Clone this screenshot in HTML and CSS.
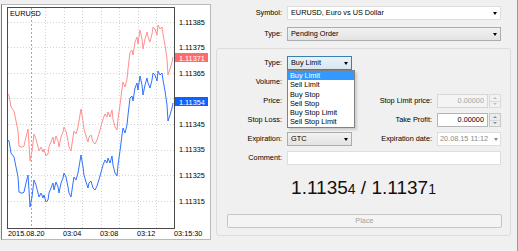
FILE: index.html
```html
<!DOCTYPE html>
<html lang="en">
<head>
    <title>Order</title>
    <meta charset="UTF-8" />
    <meta name="viewport" content="width=device-width" />
    <link rel="stylesheet" href="styles.css">
</head>
<body>
    <div class="window">
        <div class="chart">
            <svg width="208" height="234" viewBox="2 5 208 234">
                <defs>
                    <polyline id="bid" fill="none" points="7,139 9,141 11,153 14,157 16,167 18,177 19,192 21,193 23,193 24,192 26,183 28,175 29,190 30,207 32,197 34,180 36,185 38,193 39,197 41,193 43,198 44,195 46,202 48,200 49,193 51,188 53,183 54,190 56,182 58,187 59,193 61,183 63,178 64,173 66,177 68,187 69,193 71,197 73,183 74,177 76,180 78,173 79,167 81,155 83,167 84,175 86,182 88,188 89,183 91,181 93,188 95,190 97,186 100,176 103,165 105,160 107,163 108,158 110,163 112,156 113,165 115,173 117,176 118,165 120,151 122,135 123,128 125,133 127,125 128,115 130,98 132,96 133,101 135,88 137,83 138,90 140,76 142,85 143,95 145,85 147,78 148,83 150,88 152,80 153,73 155,75 157,81 158,71 160,75 162,73 163,80 165,91 167,105 168,121 170,115 172,108 173,103" />
                </defs>

                <!-- grid -->
                <g class="grid">
                    <line x1="8" x2="174" y1="22.5" y2="22.5" />
                    <line x1="8" x2="174" y1="47.5" y2="47.5" />
                    <line x1="8" x2="174" y1="73.5" y2="73.5" />
                    <line x1="8" x2="174" y1="98.5" y2="98.5" />
                    <line x1="8" x2="174" y1="124.5" y2="124.5" />
                    <line x1="8" x2="174" y1="150.5" y2="150.5" />
                    <line x1="8" x2="174" y1="175.5" y2="175.5" />
                    <line x1="8" x2="174" y1="201.5" y2="201.5" />
                    <line x1="45.5" x2="45.5" y1="8" y2="228" />
                    <line x1="64.5" x2="64.5" y1="8" y2="228" />
                    <line x1="82.5" x2="82.5" y1="8" y2="228" />
                    <line x1="101.5" x2="101.5" y1="8" y2="228" />
                    <line x1="119.5" x2="119.5" y1="8" y2="228" />
                    <line x1="138.5" x2="138.5" y1="8" y2="228" />
                    <line x1="156.5" x2="156.5" y1="8" y2="228" />
                </g>
                <line class="separator" x1="31.5" x2="31.5" y1="8" y2="228" />

                <use href="#bid" class="ask-line" transform="translate(0 -46)" />
                <use href="#bid" class="bid-line" />

                <rect class="frame" x="7.5" y="7.5" width="167" height="221" />

                <text class="label" x="10" y="15.5">EURUSD</text>

                <g class="label">
                    <text x="179" y="24.6">1.11385</text>
                    <text x="179" y="50">1.11375</text>
                    <text x="179" y="75.6">1.11365</text>
                    <text x="179" y="126.8">1.11345</text>
                    <text x="179" y="152.4">1.11335</text>
                    <text x="179" y="178">1.11325</text>
                    <text x="179" y="203.6">1.11315</text>
                </g>

                <rect class="ask-tag" x="175" y="53" width="33" height="9" />
                <text class="tag-text" x="179" y="60.6">1.11371</text>
                <rect class="bid-tag" x="175" y="97" width="33" height="9" />
                <text class="tag-text" x="179" y="104.6">1.11354</text>

                <g class="label">
                    <text x="8" y="235.6">2015.08.20</text>
                    <text x="63" y="235.6">03:04</text>
                    <text x="100" y="235.6">03:08</text>
                    <text x="137" y="235.6">03:12</text>
                    <text x="174" y="235.6">03:15:30</text>
                </g>
            </svg>
        </div>

        <div class="dialog">
            <div class="top-row">
                <span class="label">Symbol:</span>
                <div class="field combo wide">EURUSD, Euro vs US Dollar<span class="arrow"></span></div>
            </div>
            <div class="top-row">
                <span class="label">Type:</span>
                <div class="field combo raised wide">Pending Order<span class="arrow"></span></div>
            </div>

            <div class="panel">
                <div class="form">
                    <span class="label c1">Type:</span>
                    <div class="field combo focus c2">Buy Limit<span class="arrow"></span>
                        <ul class="dropdown">
                            <li class="selected">Buy Limit</li>
                            <li>Sell Limit</li>
                            <li>Buy Stop</li>
                            <li>Sell Stop</li>
                            <li>Buy Stop Limit</li>
                            <li>Sell Stop Limit</li>
                        </ul>
                    </div>

                    <span class="label c1">Volume:</span>
                    <div class="field c2"></div>

                    <span class="label c1">Price:</span>
                    <div class="field c2"></div>
                    <span class="label c3">Stop Limit price:</span>
                    <div class="spin c4">
                        <div class="field num disabled">0.00000</div>
                        <div class="spinner disabled"><span class="up"></span><span class="down"></span></div>
                    </div>

                    <span class="label c1">Stop Loss:</span>
                    <div class="field c2"></div>
                    <span class="label c3">Take Profit:</span>
                    <div class="spin c4">
                        <div class="field num">0.00000</div>
                        <div class="spinner"><span class="up"></span><span class="down"></span></div>
                    </div>

                    <span class="label c1">Expiration:</span>
                    <div class="field combo raised c2">GTC<span class="arrow"></span></div>
                    <span class="label c3">Expiration date:</span>
                    <div class="field combo muted c4">20.08.15 11:12<span class="arrow"></span></div>

                    <span class="label c1">Comment:</span>
                    <div class="field span"></div>
                </div>

                <div class="quote">1.1135<small>4</small> / 1.1137<small>1</small></div>

                <button class="place" disabled>Place</button>
            </div>
        </div>
    </div>
</body>
</html>
```

FILE: styles.css
```css
body {
    margin: 0;
    background: #f0f0f0;
    font-family: "Liberation Sans", Arial, sans-serif;
    font-size: 7.3px;
    color: #000;
}
.window {
    display: flex;
    align-items: flex-start;
    width: 518px;
    height: 251px;
    box-sizing: border-box;
    border-right: 1px solid #9a9a9a;
}

/* chart */
.chart {
    margin: 4px 0 0 1px;
    width: 210px;
    height: 236px;
    box-sizing: border-box;
    border: 1px solid #b9b9b9;
    border-left-color: #7c7c7c;
    background: #fff;
}
.chart svg {
    display: block;
    font-family: "Liberation Sans", Arial, sans-serif;
    font-size: 7.3px;
}
.grid line {
    stroke: #d4d4d4;
    stroke-width: 1;
    stroke-dasharray: 1 2;
}
.separator {
    stroke: #a8a8a8;
    stroke-dasharray: 2 2;
}
.frame {
    fill: none;
    stroke: #4a4a4a;
}
.ask-line {
    stroke: #ff9090;
    stroke-width: 1;
}
.bid-line {
    stroke: #2f72ff;
    stroke-width: 1;
}
.label {
    fill: #000;
}
.ask-tag {
    fill: #ff6b6b;
}
.bid-tag {
    fill: #0b62ff;
}
.tag-text {
    fill: #fff;
}

/* dialog */
.dialog {
    margin-left: 5px;
    width: 295px;
    padding-top: 6px;
}
.top-row {
    display: flex;
    height: 14px;
    margin-bottom: 7px;
}
.top-row .label {
    width: 66px;
    margin-right: 5px;
    text-align: right;
    line-height: 14px;
}
.top-row .wide {
    width: 214px;
}
.field {
    box-sizing: border-box;
    height: 14px;
    border: 1px solid #dedede;
    background: #fff;
    line-height: 12px;
    padding: 0 3px;
    white-space: nowrap;
}
.combo {
    display: flex;
    justify-content: space-between;
    align-items: center;
    position: relative;
}
.arrow {
    width: 0;
    height: 0;
    border-left: 2.5px solid transparent;
    border-right: 2.5px solid transparent;
    border-top: 3px solid #000;
}
.raised {
    border-color: #acacac;
    background: linear-gradient(#f2f2f2, #e3e3e3);
}
.focus {
    border-color: #3c7fb1;
    background: linear-gradient(#eaf3fa, #d8e6f1);
}
.muted {
    color: #8a8a8a;
    padding: 0 2px;
}
.muted .arrow {
    border-top-color: #8a8a8a;
}

.panel {
    margin-top: 4px;
    height: 188px;
    box-sizing: border-box;
    border: 1px solid #dcdcdc;
    border-radius: 3px;
    padding-top: 7px;
}
.form {
    display: grid;
    grid-template-columns: 70px 65px 85px 64px;
    grid-auto-rows: 14px;
    row-gap: 5px;
}
.form .label {
    text-align: right;
    padding-right: 5px;
    line-height: 14px;
}
.c1 { grid-column: 1; }
.c2 { grid-column: 2; }
.c3 { grid-column: 3; }
.c4 { grid-column: 4; }
.span { grid-column: 2 / 5; }

.dropdown {
    position: absolute;
    top: 13px;
    left: -1px;
    z-index: 2;
    width: 66px;
    margin: 0;
    padding: 0;
    list-style: none;
    background: #fff;
    border: 1px solid #828282;
    box-shadow: 2px 2px 2px rgba(0, 0, 0, 0.15);
}
.dropdown li {
    height: 9.3px;
    line-height: 9.3px;
    padding: 0 2px;
}
.dropdown .selected {
    background: #3399ff;
    color: #fff;
}

.spin {
    display: flex;
    gap: 1px;
}
.num {
    flex: 1;
    text-align: right;
    border-color: #b5b5b5;
}
.num.disabled {
    background: #f4f4f4;
    color: #a6a6a6;
    border-color: #d6d6d6;
}
.spinner {
    width: 12px;
    height: 14px;
    box-sizing: border-box;
    border: 1px solid #c8c8c8;
    background: #ececec;
    display: flex;
    flex-direction: column;
}
.spinner span {
    flex: 1;
    display: flex;
    align-items: center;
    justify-content: center;
}
.spinner span + span {
    border-top: 1px solid #d8d8d8;
}
.spinner .up::before,
.spinner .down::before {
    content: "";
    border-left: 2px solid transparent;
    border-right: 2px solid transparent;
}
.spinner .up::before {
    border-bottom: 2px solid #6d8fbf;
}
.spinner .down::before {
    border-top: 2px solid #6d8fbf;
}
.spinner.disabled {
    border-color: #dadada;
    background: #f2f2f2;
}
.spinner.disabled .up::before {
    border-bottom-color: #bcbcbc;
}
.spinner.disabled .down::before {
    border-top-color: #bcbcbc;
}

.quote {
    margin-top: 12px;
    text-align: center;
    font-size: 19px;
    line-height: 22px;
    color: #111;
}
.quote small {
    font-size: 14px;
}
.place {
    display: block;
    box-sizing: border-box;
    width: 275px;
    height: 14px;
    margin: 14px 0 0 10px;
    padding: 0;
    border: 1px solid #c6c6c6;
    border-radius: 2px;
    background: #f4f4f4;
    color: #a2a2a2;
    font-family: inherit;
    font-size: 7.3px;
    line-height: 12px;
}
```
